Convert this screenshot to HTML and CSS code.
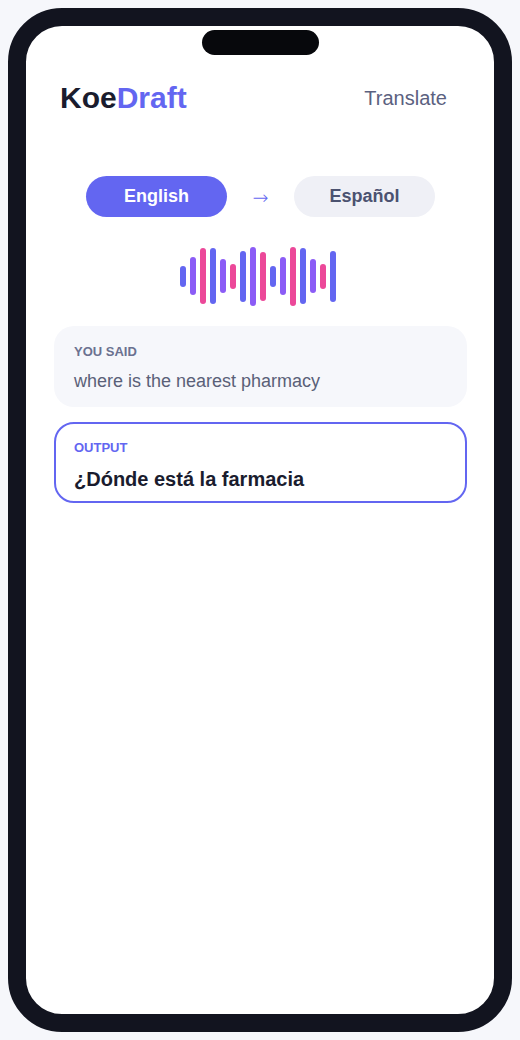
FILE: index.html
```html
<!DOCTYPE html>
<html lang="en">
<head>
    <meta charset="UTF-8">
    <meta name="viewport" content="width=device-width, initial-scale=1.0">
    <title>KoeDraft - Translate</title>
    <link rel="stylesheet" href="styles.css">
</head>
<body>
    <div class="phone">
        <div class="notch"></div>
        <div class="screen">
            <header class="app-header">
                <div class="logo">Koe<span>Draft</span></div>
                <a class="nav-link" href="#">Translate</a>
            </header>

            <div class="lang-row">
                <button class="lang-pill active">English</button>
                <span class="lang-arrow">→</span>
                <button class="lang-pill">Español</button>
            </div>

            <div class="wave">
                <span class="bar blue" style="height: 21px"></span>
                <span class="bar purple" style="height: 38px"></span>
                <span class="bar pink" style="height: 56px"></span>
                <span class="bar blue" style="height: 56px"></span>
                <span class="bar purple" style="height: 34px"></span>
                <span class="bar pink" style="height: 25px"></span>
                <span class="bar blue" style="height: 51px"></span>
                <span class="bar purple" style="height: 59px"></span>
                <span class="bar pink" style="height: 49px"></span>
                <span class="bar blue" style="height: 21px"></span>
                <span class="bar purple" style="height: 38px"></span>
                <span class="bar pink" style="height: 59px"></span>
                <span class="bar blue" style="height: 56px"></span>
                <span class="bar purple" style="height: 34px"></span>
                <span class="bar pink" style="height: 25px"></span>
                <span class="bar blue" style="height: 51px"></span>
            </div>

            <div class="card said">
                <div class="card-label">You said</div>
                <div class="card-text">where is the nearest pharmacy</div>
            </div>

            <div class="card output">
                <div class="card-label">Output</div>
                <div class="card-text">¿Dónde está la farmacia</div>
            </div>
        </div>
    </div>
</body>
</html>
```

FILE: styles.css
```css
body {
    font-family: "Liberation Sans", Arial, sans-serif;
    margin: 8px;
    background-color: #f6f7fb;
}
.phone {
    position: relative;
    height: 1024px;
    box-sizing: border-box;
    border: 18px solid #12141f;
    border-radius: 54px;
    background-color: #fff;
    overflow: hidden;
}
.notch {
    position: absolute;
    top: 4px;
    left: 50%;
    width: 117px;
    height: 25px;
    margin-left: -58px;
    border-radius: 13px;
    background-color: #07080c;
}
.screen {
    padding-top: 55px;
}
.app-header {
    display: flex;
    justify-content: space-between;
    align-items: center;
    height: 34px;
    padding: 0 34px;
}
.logo {
    font-size: 30px;
    line-height: 34px;
    font-weight: bold;
    color: #1a1c2e;
}
.logo span {
    color: #6366f1;
}
.nav-link {
    font-size: 20px;
    line-height: 22px;
    padding: 6px 13px;
    color: #5b6180;
    text-decoration: none;
}
.lang-row {
    display: flex;
    justify-content: center;
    align-items: center;
    gap: 25px;
    margin-top: 61px;
    padding-left: 1px;
}
.lang-pill {
    width: 141px;
    padding: 10px 0;
    border: none;
    border-radius: 999px;
    font-family: inherit;
    font-size: 18px;
    line-height: 21px;
    font-weight: bold;
    background-color: #eff0f6;
    color: #4b5270;
}
.lang-pill.active {
    background-color: #6366f1;
    color: #fff;
}
.lang-arrow {
    width: 17px;
    text-align: center;
    font-family: "DejaVu Sans", sans-serif;
    font-size: 19px;
    font-weight: 200;
    line-height: 22px;
    color: #6366f1;
}
.wave {
    display: flex;
    justify-content: center;
    align-items: center;
    gap: 4px;
    height: 60px;
    margin-top: 29px;
    padding-right: 4px;
}
.bar {
    width: 6px;
    border-radius: 3px;
}
.bar.blue {
    background-color: #6366f1;
}
.bar.purple {
    background-color: #8b5cf6;
}
.bar.pink {
    background-color: #ec4899;
}
.card {
    margin: 20px 27px 0 28px;
    border-radius: 20px;
}
.card-label {
    font-size: 13px;
    line-height: 15px;
    font-weight: bold;
    text-transform: uppercase;
}
.said {
    padding: 18px 20px 16px;
    background-color: #f6f7fb;
}
.said .card-label {
    margin-bottom: 12px;
    color: #6b7190;
}
.said .card-text {
    font-size: 18px;
    line-height: 20px;
    color: #5a6078;
}
.output {
    margin-top: 15px;
    padding: 16px 18px 11px;
    border: 2px solid #6366f1;
}
.output .card-label {
    margin-bottom: 13px;
    color: #6366f1;
}
.output .card-text {
    font-size: 20px;
    line-height: 22px;
    font-weight: bold;
    color: #1a1c2e;
}
```
